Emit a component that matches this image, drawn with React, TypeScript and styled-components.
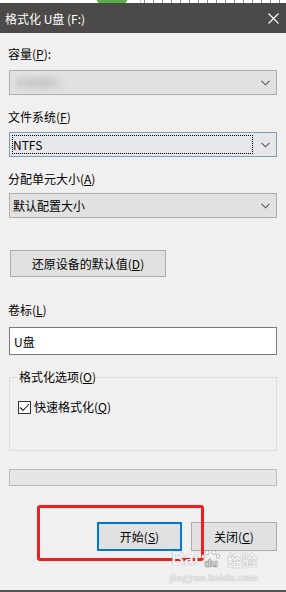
import { JSX } from 'react';
import styled, { createGlobalStyle } from 'styled-components';

const GlobalStyle = createGlobalStyle`
  html, body {
    margin: 0;
    padding: 0;
    background: #f0f0f0;
  }
  body {
    font-family: 'Noto Sans CJK SC', 'Noto Sans', sans-serif;
    font-size: 12px;
    color: #000;
  }
`;

const Window = styled.div`
  position: relative;
  width: 286px;
  height: 592px;
  box-sizing: border-box;
  display: flex;
  flex-direction: column;
  background: #f0f0f0;
  border-bottom: 2px solid #555;
  overflow: hidden;
`;

const PageStrip = styled.div`
  height: 3px;
  background: #fff;
  display: flex;
  align-items: stretch;
  padding-left: 97px;
  gap: 13px;
`;

const GreenBlob = styled.div`
  width: 30px;
  background: #5aad47;
  border-radius: 0 0 10px 10px;
`;

const StripText = styled.div`
  flex: 1;
  border-left: 1px solid #aaa;
  background: repeating-linear-gradient(90deg, #fff 0 3px, #444 3px 4px, #fff 4px 9px);
  opacity: 0.6;
`;

const TitleBar = styled.div`
  height: 30px;
  background: #4b4a48;
  color: #fff;
  display: flex;
  align-items: center;
  justify-content: space-between;
  padding: 0 7px 0 5px;
`;

const Title = styled.div`
  font-size: 12px;
  line-height: 16px;
  margin-top: 1px;
`;

const Body = styled.div`
  flex: 1;
  display: flex;
  flex-direction: column;
  padding: 13px 9px 0 9px;
`;

const Label = styled.div<{ $gap?: number }>`
  line-height: 16px;
  margin-top: ${(p) => p.$gap ?? 0}px;
  margin-left: -1px;
`;

const U = styled.span`
  text-decoration: underline;
  text-underline-offset: 1px;
`;

const Combo = styled.div<{ $focused?: boolean; $gap: number }>`
  height: 25px;
  box-sizing: border-box;
  margin-top: ${(p) => p.$gap}px;
  display: flex;
  align-items: center;
  padding: 2px 6px 2px 2px;
  background: ${(p) => (p.$focused ? '#e5e7ea' : '#e1e1e1')};
  border: 1px solid ${(p) => (p.$focused ? '#7c9db7' : '#adadad')};
`;

const ComboValue = styled.div<{ $focused?: boolean }>`
  flex: 1;
  align-self: stretch;
  display: flex;
  align-items: center;
  padding-left: 1px;
  margin-right: 8px;
  line-height: 16px;
  outline: ${(p) => (p.$focused ? '1px dotted #000' : 'none')};
  outline-offset: -1px;
`;

const Blurred = styled.div`
  width: 50px;
  height: 12px;
  margin-left: 2px;
  background: linear-gradient(90deg, #d2d2d2, #c9c9c9 60%, #dedede);
  filter: blur(2px);
  border-radius: 4px;
`;

const Chevron = () => (
  <svg width="9" height="6" viewBox="0 0 9 6">
    <polyline points="0.5,0.8 4.5,4.8 8.5,0.8" fill="none" stroke="#555" strokeWidth="1.1" />
  </svg>
);

const PushButton = styled.button<{ $primary?: boolean; $width: number }>`
  width: ${(p) => p.$width}px;
  height: 29px;
  box-sizing: border-box;
  background: #e1e1e1;
  border: ${(p) => (p.$primary ? '2px solid #0078d7' : '1px solid #adadad')};
  font-family: inherit;
  font-size: 12px;
  color: #000;
  padding: 0;
  line-height: 16px;
`;

const ResetButton = styled(PushButton)`
  height: 27px;
  margin-top: 32px;
  margin-left: 1px;
`;

const TextBox = styled.div`
  height: 28px;
  box-sizing: border-box;
  margin-top: 9px;
  background: #fff;
  border: 1px solid #7a7a7a;
  display: flex;
  align-items: center;
  padding-left: 4px;
`;

const Group = styled.fieldset`
  margin: 14px 0 0 0;
  padding: 0 8px 35px 8px;
  border: 1px solid #dcdcdc;
  min-width: 0;
`;

const Legend = styled.legend`
  padding: 0 1px;
  line-height: 16px;
`;

const CheckRow = styled.label`
  display: flex;
  align-items: center;
  gap: 3px;
  margin-top: 14px;
  line-height: 16px;
`;

const CheckBox = styled.span`
  width: 13px;
  height: 13px;
  box-sizing: border-box;
  border: 1px solid #333;
  background: #fff;
  display: flex;
  align-items: center;
  justify-content: center;
`;

const Progress = styled.div`
  height: 17px;
  box-sizing: border-box;
  margin-top: 18px;
  background: #e6e6e6;
  border: 1px solid #bcbcbc;
`;

const ButtonRow = styled.div`
  display: flex;
  justify-content: flex-end;
  gap: 9px;
  margin-top: 36px;
`;

const Annotation = styled.div`
  position: absolute;
  left: 37px;
  top: 505px;
  width: 167px;
  height: 56px;
  box-sizing: border-box;
  border: 3px solid #f41d1d;
  border-radius: 3px;
  pointer-events: none;
`;

const Watermark = styled.div`
  position: absolute;
  left: 169px;
  top: 550px;
  width: 90px;
  display: flex;
  flex-direction: column;
  align-items: center;
  color: rgba(252, 252, 252, 0.95);
  text-shadow: 0 0 1px rgba(0, 0, 0, 0.32), 0 0 1px rgba(0, 0, 0, 0.2);
  pointer-events: none;
`;

const Brand = styled.div`
  display: flex;
  align-items: flex-end;
  font-family: 'Liberation Sans', Arial, sans-serif;
  font-weight: bold;
  font-size: 18px;
  line-height: 18px;
  letter-spacing: -0.3px;
`;

const BrandCn = styled.span`
  font-family: 'Noto Sans CJK SC', sans-serif;
  font-size: 15px;
  line-height: 17px;
  font-weight: bold;
  margin-left: 3px;
`;

const Domain = styled.div`
  font-family: 'Liberation Serif', serif;
  font-size: 11px;
  line-height: 12px;
  margin-top: 3px;
  letter-spacing: 0.4px;
`;

const Paw = () => (
  <svg width="25" height="18" viewBox="0 0 25 18" style={{ marginLeft: 1 }}>
    <g fill="rgba(252,252,252,0.95)" stroke="rgba(0,0,0,0.28)" strokeWidth="0.8">
      <ellipse cx="8" cy="2.6" rx="2" ry="2.2" />
      <ellipse cx="15" cy="2.4" rx="2" ry="2.2" />
      <ellipse cx="4" cy="6.5" rx="1.6" ry="1.9" />
      <ellipse cx="19" cy="6.3" rx="1.6" ry="1.9" />
    </g>
    <text
      x="12"
      y="17"
      textAnchor="middle"
      fontFamily="Liberation Sans, Arial, sans-serif"
      fontWeight="bold"
      fontSize="11"
      fill="rgba(252,252,252,0.95)"
      stroke="rgba(0,0,0,0.28)"
      strokeWidth="0.6"
    >
      du
    </text>
  </svg>
);

const CloseIcon = () => (
  <svg width="11" height="11" viewBox="0 0 11 11">
    <path d="M0.5 0.5 L10.5 10.5 M10.5 0.5 L0.5 10.5" stroke="#fff" strokeWidth="1.1" />
  </svg>
);

const App = (): JSX.Element => {
  return (
    <>
      <GlobalStyle />
      <Window>
        <PageStrip>
          <GreenBlob />
          <StripText />
        </PageStrip>
        <TitleBar>
          <Title>格式化 U盘 (F:)</Title>
          <CloseIcon />
        </TitleBar>
        <Body>
          <Label>容量(<U>P</U>):</Label>
          <Combo $gap={8}>
            <ComboValue>
              <Blurred />
            </ComboValue>
            <Chevron />
          </Combo>

          <Label $gap={14}>文件系统(<U>F</U>)</Label>
          <Combo $gap={7} $focused>
            <ComboValue $focused>NTFS</ComboValue>
            <Chevron />
          </Combo>

          <Label $gap={14}>分配单元大小(<U>A</U>)</Label>
          <Combo $gap={6}>
            <ComboValue>默认配置大小</ComboValue>
            <Chevron />
          </Combo>

          <ResetButton $width={156}>
            还原设备的默认值(<U>D</U>)
          </ResetButton>

          <Label $gap={25}>卷标(<U>L</U>)</Label>
          <TextBox>U盘</TextBox>

          <Group>
            <Legend>
              格式化选项(<U>O</U>)
            </Legend>
            <CheckRow>
              <CheckBox>
                <svg width="11" height="9" viewBox="0 0 11 9">
                  <polyline points="1,4.5 4,7.5 10,1" fill="none" stroke="#222" strokeWidth="1.1" />
                </svg>
              </CheckBox>
              <span>
                快速格式化(<U>Q</U>)
              </span>
            </CheckRow>
          </Group>

          <Progress />

          <ButtonRow>
            <PushButton $primary $width={85}>
              开始(<U>S</U>)
            </PushButton>
            <PushButton $width={86}>
              关闭(<U>C</U>)
            </PushButton>
          </ButtonRow>
        </Body>

        <Annotation />
        <Watermark>
          <Brand>
            Bai
            <Paw />
            <BrandCn>经验</BrandCn>
          </Brand>
          <Domain>jingyan.baidu.com</Domain>
        </Watermark>
      </Window>
    </>
  );
};

export default App;
